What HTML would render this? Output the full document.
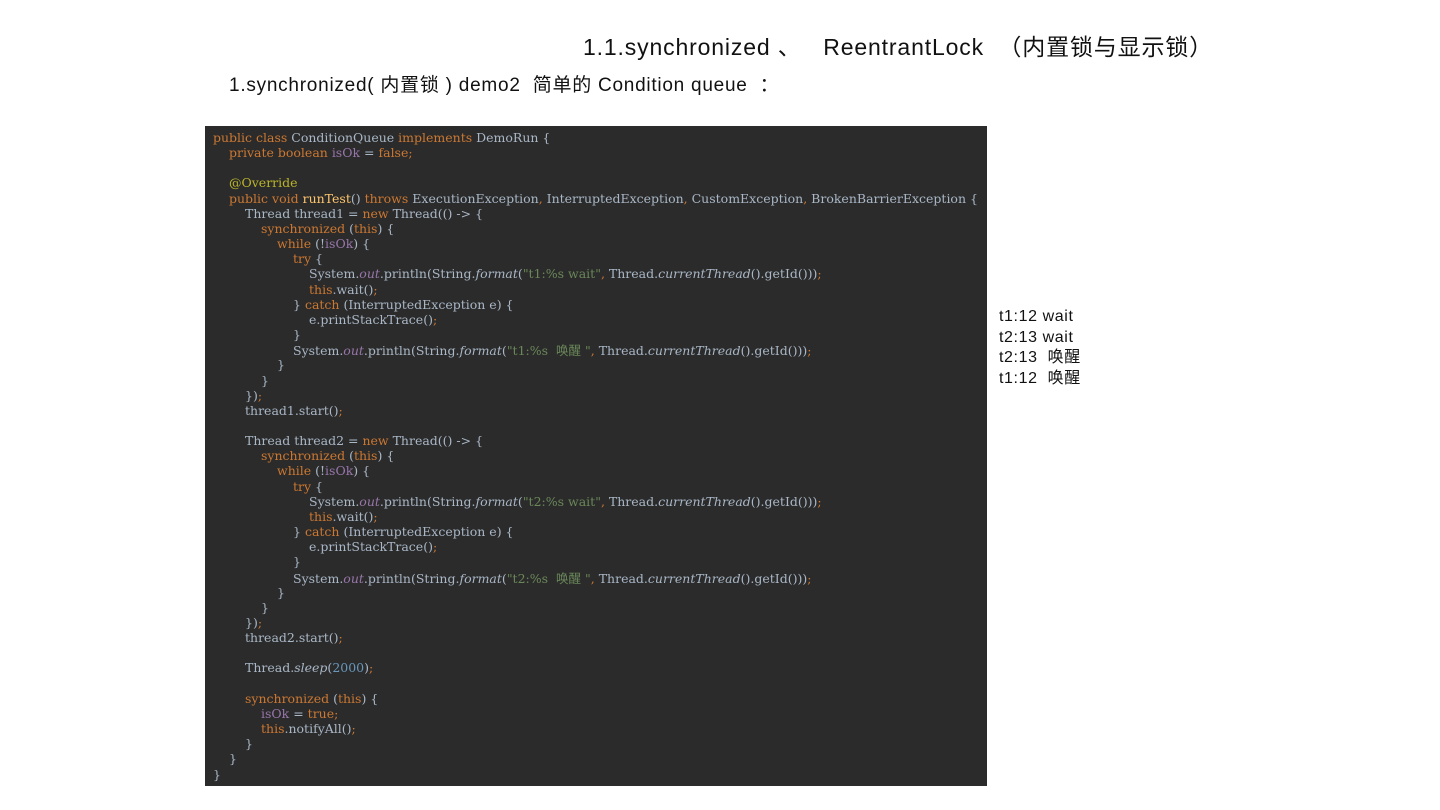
<!DOCTYPE html>
<html><head><meta charset="utf-8"><style>
body{margin:0;width:1440px;height:810px;background:#fff;position:relative;overflow:hidden;font-family:"Liberation Sans","Noto Sans CJK SC",sans-serif;color:#111}
.t{position:absolute;white-space:nowrap}
#code{position:absolute;left:205px;top:126px;width:782px;height:660px;background:#2b2b2b;font-family:"DejaVu Serif",serif;font-size:12.5px;color:#a9b7c6;padding-top:4px;box-sizing:border-box}
#code div{height:15.17px;line-height:15.17px;white-space:pre;padding-left:8px}
.k{color:#cc7832}.f{color:#9876aa}.s{color:#6a8759}.a{color:#bbb529}.m{color:#ffc66d}.n{color:#6897bb}.i{font-style:italic}
.s span,.cjk{font-family:"Noto Sans CJK SC",sans-serif}
</style></head><body>
<div class="t" style="left:583px;top:28px;font-size:23px;letter-spacing:0.85px">1.1.synchronized 、&nbsp;&nbsp; ReentrantLock &nbsp;（内置锁与显示锁）</div>
<div class="t" style="left:229px;top:70px;font-size:19px;letter-spacing:0.75px">1.synchronized( 内置锁 ) demo2&nbsp; 简单的 Condition queue&nbsp; ：</div>
<div class="t" style="left:999px;top:307px;font-size:16px;letter-spacing:0.6px;line-height:20.5px">t1:12 wait<br>t2:13 wait<br>t2:13&nbsp; 唤醒<br>t1:12&nbsp; 唤醒</div>
<div id="code">
<div><span class="k">public class </span>ConditionQueue <span class="k">implements </span>DemoRun {</div>
<div style="padding-left:24px"><span class="k">private boolean </span><span class="f">isOk </span>= <span class="k">false;</span></div>
<div></div>
<div style="padding-left:24px"><span class="a">@Override</span></div>
<div style="padding-left:24px"><span class="k">public void </span><span class="m">runTest</span>() <span class="k">throws </span>ExecutionException<span class="k">, </span>InterruptedException<span class="k">, </span>CustomException<span class="k">, </span>BrokenBarrierException {</div>
<div style="padding-left:40px">Thread thread1 = <span class="k">new </span>Thread(() -&gt; {</div>
<div style="padding-left:56px"><span class="k">synchronized </span>(<span class="k">this</span>) {</div>
<div style="padding-left:72px"><span class="k">while </span>(!<span class="f">isOk</span>) {</div>
<div style="padding-left:88px"><span class="k">try </span>{</div>
<div style="padding-left:104px">System.<span class="f i">out</span>.println(String.<span class="i">format</span>(<span class="s">"t1:%s wait"</span><span class="k">, </span>Thread.<span class="i">currentThread</span>().getId()))<span class="k">;</span></div>
<div style="padding-left:104px"><span class="k">this</span>.wait()<span class="k">;</span></div>
<div style="padding-left:88px">} <span class="k">catch </span>(InterruptedException e) {</div>
<div style="padding-left:104px">e.printStackTrace()<span class="k">;</span></div>
<div style="padding-left:88px">}</div>
<div style="padding-left:88px">System.<span class="f i">out</span>.println(String.<span class="i">format</span>(<span class="s">"t1:%s&nbsp; <span>唤醒</span> "</span><span class="k">, </span>Thread.<span class="i">currentThread</span>().getId()))<span class="k">;</span></div>
<div style="padding-left:72px">}</div>
<div style="padding-left:56px">}</div>
<div style="padding-left:40px">})<span class="k">;</span></div>
<div style="padding-left:40px">thread1.start()<span class="k">;</span></div>
<div></div>
<div style="padding-left:40px">Thread thread2 = <span class="k">new </span>Thread(() -&gt; {</div>
<div style="padding-left:56px"><span class="k">synchronized </span>(<span class="k">this</span>) {</div>
<div style="padding-left:72px"><span class="k">while </span>(!<span class="f">isOk</span>) {</div>
<div style="padding-left:88px"><span class="k">try </span>{</div>
<div style="padding-left:104px">System.<span class="f i">out</span>.println(String.<span class="i">format</span>(<span class="s">"t2:%s wait"</span><span class="k">, </span>Thread.<span class="i">currentThread</span>().getId()))<span class="k">;</span></div>
<div style="padding-left:104px"><span class="k">this</span>.wait()<span class="k">;</span></div>
<div style="padding-left:88px">} <span class="k">catch </span>(InterruptedException e) {</div>
<div style="padding-left:104px">e.printStackTrace()<span class="k">;</span></div>
<div style="padding-left:88px">}</div>
<div style="padding-left:88px">System.<span class="f i">out</span>.println(String.<span class="i">format</span>(<span class="s">"t2:%s&nbsp; <span>唤醒</span> "</span><span class="k">, </span>Thread.<span class="i">currentThread</span>().getId()))<span class="k">;</span></div>
<div style="padding-left:72px">}</div>
<div style="padding-left:56px">}</div>
<div style="padding-left:40px">})<span class="k">;</span></div>
<div style="padding-left:40px">thread2.start()<span class="k">;</span></div>
<div></div>
<div style="padding-left:40px">Thread.<span class="i">sleep</span>(<span class="n">2000</span>)<span class="k">;</span></div>
<div></div>
<div style="padding-left:40px"><span class="k">synchronized </span>(<span class="k">this</span>) {</div>
<div style="padding-left:56px"><span class="f">isOk </span>= <span class="k">true;</span></div>
<div style="padding-left:56px"><span class="k">this</span>.notifyAll()<span class="k">;</span></div>
<div style="padding-left:40px">}</div>
<div style="padding-left:24px">}</div>
<div>}</div>
</div>
</body></html>
